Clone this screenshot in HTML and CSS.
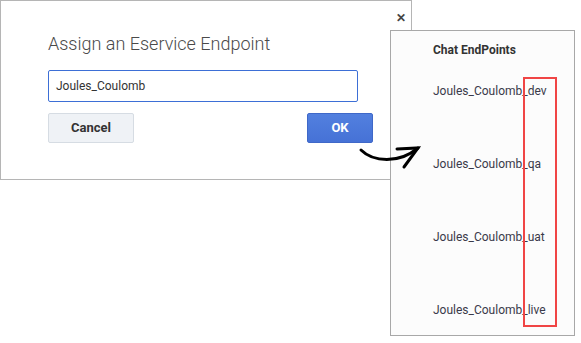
FILE: index.html
```html
<!DOCTYPE html>
<html lang="en">
<head>
    <meta charset="UTF-8">
    <title>Assign an Eservice Endpoint</title>
    <link rel="stylesheet" href="styles.css">
</head>
<body>
    <div class="canvas">
        <div class="dialog">
            <div class="close">&#x2715;</div>
            <div class="title">Assign an Eservice Endpoint</div>
            <div class="field">Joules_Coulomb</div>
            <div class="actions">
                <div class="btn cancel">Cancel</div>
                <div class="btn ok">OK</div>
            </div>
        </div>
        <div class="panel">
            <div class="panelHead">Chat EndPoints</div>
            <div class="endpoints">
                <div>Joules_Coulomb_dev</div>
                <div>Joules_Coulomb_qa</div>
                <div>Joules_Coulomb_uat</div>
                <div>Joules_Coulomb_live</div>
            </div>
            <div class="highlight"></div>
        </div>
        <svg class="arrow" width="70" height="35" viewBox="0 0 70 35">
            <path d="M6 10 C18 22 44 24 63 8" fill="none" stroke="#000" stroke-width="3" stroke-linecap="round"/>
            <path d="M42 9 L63 8 L49 27" fill="none" stroke="#000" stroke-width="3" stroke-linecap="round" stroke-linejoin="miter"/>
        </svg>
    </div>
</body>
</html>
```
FILE: styles.css
```css
body{
    margin: 0;
    background: #fff;
    font-family: Roboto, "Liberation Sans", sans-serif;
}
.canvas{
    position: relative;
    width: 581px;
    height: 343px;
}
.dialog{
    position: relative;
    box-sizing: border-box;
    width: 412px;
    height: 180px;
    border: 1px solid #b5b5b5;
    background: #fff;
    padding: 0 0 0 47px;
}
.close{
    position: absolute;
    right: 5px;
    top: 10px;
    font-size: 12px;
    font-weight: 700;
    color: #444;
}
.title{
    margin-top: 31px;
    font-size: 18px;
    font-weight: 300;
    color: #4a4a4a;
    height: 23px;
    line-height: 23px;
}
.field{
    box-sizing: border-box;
    margin-top: 15px;
    width: 310px;
    height: 32px;
    border: 1px solid #3d6fd6;
    border-radius: 2px;
    padding-left: 7px;
    font-size: 12px;
    line-height: 30px;
    color: #333;
}
.actions{
    display: flex;
    justify-content: space-between;
    width: 325px;
    margin-top: 11px;
}
.btn{
    box-sizing: border-box;
    height: 30px;
    border-radius: 2px;
    font-size: 13px;
    font-weight: 700;
    line-height: 28px;
    text-align: center;
}
.cancel{
    width: 86px;
    background: #eff2f6;
    border: 1px solid #d6dce3;
    color: #333;
}
.ok{
    width: 66px;
    background: linear-gradient(#5280df, #4672d6);
    border: 1px solid #3f68c8;
    color: #fff;
}
.arrow{
    position: absolute;
    left: 355px;
    top: 140px;
}
.panel{
    position: absolute;
    left: 390px;
    top: 30px;
    box-sizing: border-box;
    width: 185px;
    height: 306px;
    border: 1px solid #a8a8a8;
    background: #fcfcfc;
    padding: 11px 0 0 42px;
}
.panelHead{
    font-size: 12px;
    font-weight: 700;
    color: #333;
    height: 16px;
    line-height: 16px;
}
.endpoints{
    display: flex;
    flex-direction: column;
    gap: 57px;
    margin-top: 25px;
    font-size: 12px;
    color: #3a3a4a;
}
.endpoints > div{
    height: 16px;
    line-height: 16px;
}
.highlight{
    position: absolute;
    left: 132px;
    top: 46px;
    width: 34px;
    height: 250px;
    box-sizing: border-box;
    border: 2px solid #f04545;
}
```
